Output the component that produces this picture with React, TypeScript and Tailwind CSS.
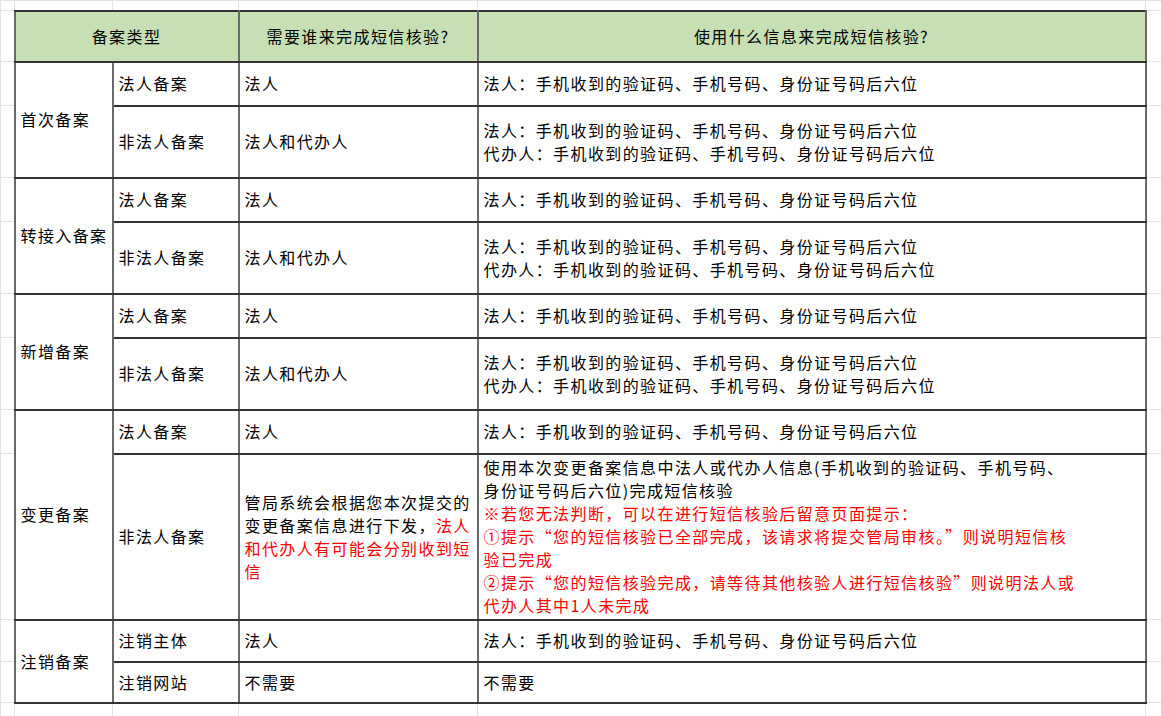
import React from 'react'

type Row = { type: string; who: React.ReactNode; info: React.ReactNode; h: string }
type Group = { name: string; rows: Row[] }

const LEGAL = '法人：手机收到的验证码、手机号码、身份证号码后六位'
const AGENT = '代办人：手机收到的验证码、手机号码、身份证号码后六位'

const both = (
  <>
    {LEGAL}
    <br />
    {AGENT}
  </>
)

const changeWho = (
  <>
    管局系统会根据您本次提交的
    <br />
    变更备案信息进行下发，<span className="text-[#ff0000]">法人</span>
    <br />
    <span className="text-[#ff0000]">
      和代办人有可能会分别收到短
      <br />信
    </span>
  </>
)

const changeInfo = (
  <>
    使用本次变更备案信息中法人或代办人信息(手机收到的验证码、手机号码、
    <br />
    身份证号码后六位)完成短信核验
    <br />
    <span className="text-[#ff0000]">
      ※若您无法判断，可以在进行短信核验后留意页面提示：
      <br />
      ①提示“您的短信核验已全部完成，该请求将提交管局审核。”则说明短信核
      <br />
      验已完成
      <br />
      ②提示“您的短信核验完成，请等待其他核验人进行短信核验”则说明法人或
      <br />
      代办人其中1人未完成
    </span>
  </>
)

const groups: Group[] = [
  {
    name: '首次备案',
    rows: [
      { type: '法人备案', who: '法人', info: LEGAL, h: 'h-[44px]' },
      { type: '非法人备案', who: '法人和代办人', info: both, h: 'h-[72px]' },
    ],
  },
  {
    name: '转接入备案',
    rows: [
      { type: '法人备案', who: '法人', info: LEGAL, h: 'h-[44px]' },
      { type: '非法人备案', who: '法人和代办人', info: both, h: 'h-[72px]' },
    ],
  },
  {
    name: '新增备案',
    rows: [
      { type: '法人备案', who: '法人', info: LEGAL, h: 'h-[44px]' },
      { type: '非法人备案', who: '法人和代办人', info: both, h: 'h-[72px]' },
    ],
  },
  {
    name: '变更备案',
    rows: [
      { type: '法人备案', who: '法人', info: LEGAL, h: 'h-[44px]' },
      { type: '非法人备案', who: changeWho, info: changeInfo, h: 'h-[166px]' },
    ],
  },
  {
    name: '注销备案',
    rows: [
      { type: '注销主体', who: '法人', info: LEGAL, h: 'h-[42px]' },
      { type: '注销网站', who: '不需要', info: '不需要', h: 'h-[41px]' },
    ],
  },
]

// sheet gridline cells around the table
const edge = 'border border-[#e2e2e2] p-0'
// table cells
const cell =
  'border-2 border-x-[#6a6a6a] border-y-[#333333] pl-[5px] pr-0 py-0 align-middle text-left whitespace-nowrap'
const head = 'border-2 border-x-[#6a6a6a] border-y-[#333333] p-0 bg-[#c6e0b4] font-normal text-center whitespace-nowrap'

export default function App() {
  return (
    <div className="w-[1161px] h-[716px] overflow-hidden bg-white text-black text-[16px] leading-[23px] tracking-[1.4px] font-['Noto_Sans_CJK_SC','Liberation_Sans',sans-serif]">
      <table className="table-fixed border-collapse w-[1161px]">
        <colgroup>
          <col className="w-[14px]" />
          <col className="w-[98px]" />
          <col className="w-[126px]" />
          <col className="w-[239px]" />
          <col className="w-[668px]" />
          <col className="w-[16px]" />
        </colgroup>
        <tbody>
          <tr className="h-[10px]">
            {[0, 1, 2, 3, 4, 5].map(i => (
              <td key={i} className={edge} />
            ))}
          </tr>

          <tr className="h-[51px]">
            <td className={edge} />
            <th colSpan={2} className={head}>
              备案类型
            </th>
            <th className={head}>需要谁来完成短信核验?</th>
            <th className={head}>使用什么信息来完成短信核验?</th>
            <td className={edge} />
          </tr>

          {groups.map(g =>
            g.rows.map((r, i) => (
              <tr key={g.name + i} className={r.h}>
                <td className={edge} />
                {i === 0 && (
                  <td rowSpan={g.rows.length} className={cell}>
                    {g.name}
                  </td>
                )}
                <td className={cell}>{r.type}</td>
                <td className={cell}>{r.who}</td>
                <td className={cell}>{r.info}</td>
                <td className={edge} />
              </tr>
            ))
          )}

          <tr className="h-[14px]">
            {[0, 1, 2, 3, 4, 5].map(i => (
              <td key={i} className={edge} />
            ))}
          </tr>
        </tbody>
      </table>
    </div>
  )
}
